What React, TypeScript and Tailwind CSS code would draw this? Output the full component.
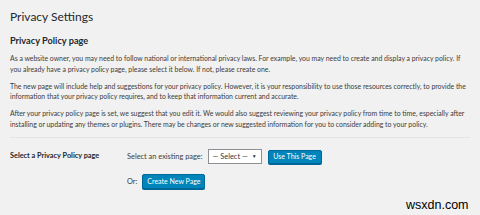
export default function App() {
  return (
    <div className="relative w-[480px] h-[215px] overflow-hidden bg-[#f1f1f1] font-['Lato',sans-serif] text-[#3c3c3c]">
      <div className="pl-[10px] pr-[10px] pt-[7px]">
        <h1 className="text-[12px] leading-[20px] text-[#23282d]">Privacy Settings</h1>
        <h2 className="mt-[8px] text-[9.2px] leading-[12px] font-bold text-[#23282d]">Privacy Policy page</h2>
        <div className="mt-[6px] text-[6.9px] leading-[10.7px]">
          <p>
            As a website owner, you may need to follow national or international privacy laws. For example, you may need to create and display a privacy policy. If you already have a privacy policy page, please select it below. If not, please create one.
          </p>
          <p className="mt-[6.2px]">
            The new page will include help and suggestions for your privacy policy. However, it is your responsibility to use those resources correctly, to provide the information that your privacy policy requires, and to keep that information current and accurate.
          </p>
          <p className="mt-[6.2px]">
            After your privacy policy page is set, we suggest that you edit it. We would also suggest reviewing your privacy policy from time to time, especially after installing or updating any themes or plugins. There may be changes or new suggested information for you to consider adding to your policy.
          </p>
        </div>
        <hr className="mt-[7.5px] border-t border-[#e2e4e7]" />
        <div className="mt-[11px] grid grid-cols-[117px_1fr] gap-y-[10px] whitespace-nowrap">
          <div className="flex h-[15px] items-center text-[7.3px] font-bold text-[#23282d]">Select a Privacy Policy page</div>
          <div className="flex items-center justify-start text-[7.4px]">
            <span className="mr-[5px]">Select an existing page:</span>
            <div className="flex h-[15px] w-[54px] items-center justify-between border border-[#8c8f94] bg-white px-[4px] text-[#32373c]">
              <span>— Select —</span>
              <span className="text-[5px]">▼</span>
            </div>
            <button className="ml-[6px] h-[14px] w-[54px] rounded-[2px] border border-[#006799] bg-[#0085ba] text-[7px] text-white shadow-[0_1px_0_#006799]">
              Use This Page
            </button>
          </div>
          <div />
          <div className="flex items-center justify-start text-[7.4px]">
            <span className="mr-[5px]">Or:</span>
            <button className="h-[15px] w-[63px] rounded-[2px] border border-[#006799] bg-[#0085ba] text-[7px] text-white shadow-[0_1px_0_#006799]">
              Create New Page
            </button>
          </div>
        </div>
      </div>
      <div className="absolute left-[406px] top-[196px] font-['Liberation_Sans',sans-serif] text-[12.5px] text-black">wsxdn.com</div>
    </div>
  );
}
